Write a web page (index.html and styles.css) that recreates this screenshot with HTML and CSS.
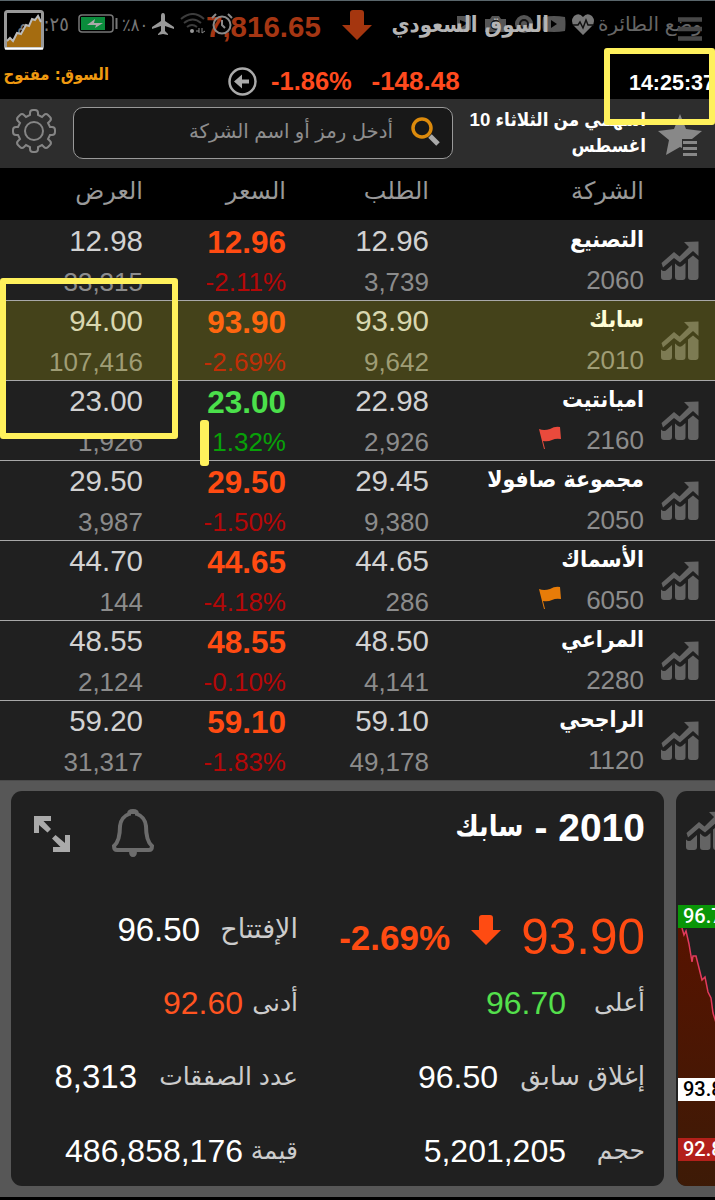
FILE: index.html
```
<!DOCTYPE html>
<html lang="ar">
<head>
  <meta charset="utf-8">
  <title>السوق السعودي</title>
  <link rel="stylesheet" href="styles.css">
</head>
<body>
  <svg class="defs" width="0" height="0">
    <symbol id="chart" viewBox="0 0 38 40">
      <path d="M0 28.500q3 3 6 0l5-4.500v12q0 3-3 3H3q-3 0-3-3zM14 22.500l3 2.500q2 1.500 4 0l3.500-3v14q0 3-3 3H17q-3 0-3-3zM27 18.500l5-4 5.500 4.500v17q0 3-3 3H30q-3 0-3-3z"/>
      <path d="M.5 22L13 11l5.500 4.500L28 6l-5-5 14.500-.5V15L32 10 19 21.500 13 17 2 26.500z"/>
    </symbol>
    <symbol id="down" viewBox="0 0 30 30">
      <path d="M8 3q0-3 3-3h8q3 0 3 3v12h8L15 30 0 15h8z"/>
    </symbol>
    <symbol id="flag" viewBox="0 0 22 23">
      <path d="M0 3q5 2 11 0 5-3 10-2l1 12q-5-1-9 1-4 2-9 1l2 8-1 0z"/>
    </symbol>
  </svg>

  <div class="screen">
    <header class="header">
      <div class="status-bar">
        <span class="phone-time"><bdo dir="ltr">م ٢:٢٥</bdo></span>
        <svg class="battery" viewBox="0 0 41 20">
          <rect x="1" y="1" width="34" height="17" rx="3" fill="none" stroke="#777" stroke-width="1.5"/>
          <rect x="3" y="3" width="24" height="13" fill="#0a8c3c"/>
          <path d="M9 11l8-6-1 4h9l-8 5 1-3z" fill="#aaa"/>
          <path d="M38.500 4v11" stroke="#777" stroke-width="2"/>
        </svg>
        <span class="charge"><bdo dir="ltr">٪٨٠</bdo></span>
        <svg class="plane" viewBox="0 0 24 24"><path d="M12 1q2 0 2 3v5l9 6v2l-9-3v5l3 3v1l-5-1-5 1v-1l3-3v-5l-9 3v-2l9-6V4q0-3 2-3z"/></svg>
        <svg class="wifi" viewBox="0 0 25 22">
          <path d="M1 6q12-10 23 0M4 10q9-7 17 0M7 14q5-4 10 0" fill="none" stroke="#3c3c3c" stroke-width="2"/>
          <circle cx="12" cy="18" r="2" fill="#999"/>
          <path d="M16 18h3M19 15v5M22 15v5l3-2" fill="none" stroke="#888"/>
        </svg>
        <svg class="notifications" viewBox="0 0 140 24">
          <path d="M2 4h14v14H2zM30 7h5l2-3h7l2 3h5v13H30zM88 5q11-2 22 0 1 7 0 14-11 2-22 0-1-7 0-14z" fill="#555"/>
          <path d="M5 8l8 3-8 5zM96 8l6 4-6 4z" fill="#000"/>
          <circle cx="40.500" cy="13" r="4" fill="none" stroke="#111" stroke-width="2"/>
          <circle cx="69" cy="12" r="9" fill="#555"/>
          <circle cx="69" cy="12" r="4" fill="none" stroke="#111" stroke-width="2"/>
          <path d="M128 23l-9-9q-4-5 0-10 5-4 9 1 4-5 9-1 4 5 0 10z" fill="#777"/>
          <path d="M118 13h5l2-3 3 6 3-8 2 5h6" fill="none" stroke="#111" stroke-width="1.5"/>
        </svg>
        <span class="flight-mode" dir="rtl">وضع الطائرة</span>
      </div>
      <div class="app-bar">
        <svg class="logo" viewBox="0 0 40 40">
          <rect x="1.5" y="1.5" width="37" height="37" rx="2" fill="none" stroke="#999" stroke-width="3"/>
          <path d="M3 37V31l3-3 3 3 4-8 4 1 5-9 3 1 3-7 3 1 3-4 3 6v25z" fill="#a56c10"/>
          <path d="M3 31l3-3 3 3 4-8 4 1 5-9 3 1 3-7 3 1 3-4 3 6" fill="none" stroke="#bbb" stroke-width="2"/>
          <path d="M1 38.5h38" stroke="#fff" stroke-width="2"/>
        </svg>
        <span class="index">7,816.65</span>
        <svg class="index-arrow"><use href="#down"/></svg>
        <span class="market" dir="rtl">السوق السعودي</span>
        <svg class="menu" viewBox="0 0 24 24"><path d="M0 2.5h24M0 12h24M0 21.5h24"/></svg>
      </div>
      <svg class="alarm" viewBox="0 0 22 22">
        <circle cx="11" cy="12" r="8.500" fill="none" stroke="#8a8a8a" stroke-width="2"/>
        <path d="M11 7v5l3 3M1 5l4-4M21 5l-4-4" fill="none" stroke="#8a8a8a" stroke-width="2"/>
      </svg>
      <div class="summary">
        <span class="state" dir="rtl">السوق: مفتوح</span>
        <svg class="back" viewBox="0 0 29 29">
          <circle cx="14.500" cy="14.500" r="13" fill="none" stroke="#aaa" stroke-width="2.500"/>
          <path d="M6 14.500l8-7v5h7v4h-7v5z" fill="#aaa"/>
        </svg>
        <span class="change-pct">-1.86%</span>
        <span class="change">-148.48</span>
        <span class="clock">14:25:37</span>
      </div>
    </header>

    <div class="toolbar">
      <svg class="gear" viewBox="-22 -22 44 44">
        <path d="M-4-16V-18Q-4-21-1-21H1Q4-21 4-18V-16L8-14 10-16Q12-18 14-16L16-14Q18-12 16-10L14-8 16-4H18Q21-4 21-1V1Q21 4 18 4H16L14 8 16 10Q18 12 16 14L14 16Q12 18 10 16L8 14 4 16V18Q4 21 1 21H-1Q-4 21-4 18V16L-8 14-10 16Q-12 18-14 16L-16 14Q-18 12-16 10L-14 8-16 4H-18Q-21 4-21 1V-1Q-21-4-18-4H-16L-14-8-16-10Q-18-12-16-14L-14-16Q-12-18-10-16L-8-14Z"/>
        <circle r="9"/>
      </svg>
      <div class="search">
        <span class="placeholder" dir="rtl">أدخل رمز أو اسم الشركة</span>
        <svg class="lens" viewBox="0 0 30 30">
          <path d="M19 19l8 8" stroke="#aaa" stroke-width="5"/>
          <circle cx="11" cy="11" r="9" fill="none" stroke="#dc8a0c" stroke-width="3.500"/>
        </svg>
      </div>
      <div class="list-name" dir="rtl">اسهمي من الثلاثاء 10<br>اغسطس</div>
      <svg class="star" viewBox="0 0 44 44">
        <path d="M22 0l6 15 16 2-10 8H24v9l-2-1-14 8 3-15L0 17l16-2z"/>
        <path d="M25 28.500h14M25 34.500h14M25 40.500h14" stroke="#888" stroke-width="3"/>
      </svg>
    </div>

    <div class="row head">
      <span dir="rtl">العرض</span>
      <span dir="rtl">السعر</span>
      <span dir="rtl">الطلب</span>
      <span dir="rtl">الشركة</span>
    </div>

    <main class="stocks">
      <div class="row down">
        <div class="ask"><b>12.98</b><i>33,315</i></div>
        <div class="price"><b>12.96</b><i>-2.11%</i></div>
        <div class="bid"><b>12.96</b><i>3,739</i></div>
        <div class="company"><b dir="rtl">التصنيع</b><i>2060</i></div>
        <svg class="chart-icon"><use href="#chart"/></svg>
      </div>
      <div class="row down selected">
        <div class="ask"><b>94.00</b><i>107,416</i></div>
        <div class="price"><b>93.90</b><i>-2.69%</i></div>
        <div class="bid"><b>93.90</b><i>9,642</i></div>
        <div class="company"><b dir="rtl">سابك</b><i>2010</i></div>
        <svg class="chart-icon"><use href="#chart"/></svg>
      </div>
      <div class="row up">
        <div class="ask"><b>23.00</b><i>1,926</i></div>
        <div class="price"><b>23.00</b><i>1.32%</i></div>
        <div class="bid"><b>22.98</b><i>2,926</i></div>
        <div class="company"><b dir="rtl">اميانتيت</b><i><svg class="flag red"><use href="#flag"/></svg>2160</i></div>
        <svg class="chart-icon"><use href="#chart"/></svg>
      </div>
      <div class="row down">
        <div class="ask"><b>29.50</b><i>3,987</i></div>
        <div class="price"><b>29.50</b><i>-1.50%</i></div>
        <div class="bid"><b>29.45</b><i>9,380</i></div>
        <div class="company"><b dir="rtl">مجموعة صافولا</b><i>2050</i></div>
        <svg class="chart-icon"><use href="#chart"/></svg>
      </div>
      <div class="row down">
        <div class="ask"><b>44.70</b><i>144</i></div>
        <div class="price"><b>44.65</b><i>-4.18%</i></div>
        <div class="bid"><b>44.65</b><i>286</i></div>
        <div class="company"><b dir="rtl">الأسماك</b><i><svg class="flag orange"><use href="#flag"/></svg>6050</i></div>
        <svg class="chart-icon"><use href="#chart"/></svg>
      </div>
      <div class="row down">
        <div class="ask"><b>48.55</b><i>2,124</i></div>
        <div class="price"><b>48.55</b><i>-0.10%</i></div>
        <div class="bid"><b>48.50</b><i>4,141</i></div>
        <div class="company"><b dir="rtl">المراعي</b><i>2280</i></div>
        <svg class="chart-icon"><use href="#chart"/></svg>
      </div>
      <div class="row down">
        <div class="ask"><b>59.20</b><i>31,317</i></div>
        <div class="price"><b>59.10</b><i>-1.83%</i></div>
        <div class="bid"><b>59.10</b><i>49,178</i></div>
        <div class="company"><b dir="rtl">الراجحي</b><i>1120</i></div>
        <svg class="chart-icon"><use href="#chart"/></svg>
      </div>
    </main>

    <section class="details">
      <div class="card">
        <div class="card-head">
          <svg class="expand" viewBox="0 0 38 38">
            <path d="M1 1h17v5h-7.500l7.500 8-3.500 3.500L6 10v8H1zM37 37H20v-5h7.500L19 23.500l3.500-3.500 9.500 8V20h5z"/>
          </svg>
          <svg class="bell" viewBox="0 0 42 50">
            <path d="M17 5q0-3 4-3t4 3q8 3 9 12 0 15 6 20 0 4-3 4H5q-3 0-3-4 6-5 6-20 1-9 9-12z" fill="none" stroke="#6c6c6c" stroke-width="4"/>
            <path d="M17 42h8q0 6-4 6t-4-6zM17 5q0-4 4-4t4 4z" fill="#6c6c6c"/>
          </svg>
          <h2 dir="rtl">2010 - <span>سابك</span></h2>
        </div>
        <div class="stats">
          <div class="stat open"><span class="value">96.50</span><span class="label" dir="rtl">الإفتتاح</span></div>
          <div class="last">
            <span class="last-pct">-2.69%</span>
            <svg class="last-arrow"><use href="#down"/></svg>
            <span class="last-price">93.90</span>
          </div>
          <div class="stat low"><span class="value">92.60</span><span class="label" dir="rtl">أدنى</span></div>
          <div class="stat high"><span class="value">96.70</span><span class="label" dir="rtl">أعلى</span></div>
          <div class="stat trades"><span class="value">8,313</span><span class="label" dir="rtl">عدد الصفقات</span></div>
          <div class="stat prev"><span class="value">96.50</span><span class="label" dir="rtl">إغلاق سابق</span></div>
          <div class="stat total"><span class="value">486,858,176</span><span class="label" dir="rtl">قيمة</span></div>
          <div class="stat volume"><span class="value">5,201,205</span><span class="label" dir="rtl">حجم</span></div>
        </div>
      </div>
      <div class="card next-card">
        <svg class="chart-icon"><use href="#chart"/></svg>
        <svg class="graph" viewBox="0 0 37 258">
          <defs>
            <linearGradient id="fall" x1="0" y1="0" x2="0" y2="1">
              <stop offset="0" stop-color="#571300"/>
              <stop offset="1" stop-color="#3b1b07"/>
            </linearGradient>
          </defs>
          <path d="M0 0h4l2 7 2-4 3 13 3 18 1-6h3l3 12 3 12 3-3 3 15 3 6 2 15 4 13 3 1v179H0z" fill="url(#fall)"/>
          <path d="M4 0l2 7 2-4 3 13 3 18 1-6h3l3 12 3 12 3-3 3 15 3 6 2 15 4 13 3 1" fill="none" stroke="#e23a5c" stroke-width="1.500"/>
        </svg>
        <span class="tag tag-high">96.70</span>
        <span class="tag tag-last">93.80</span>
        <span class="tag tag-low">92.80</span>
      </div>
    </section>

    <div class="mark mark-clock"></div>
    <div class="mark mark-ask"></div>
    <div class="mark-line"></div>
  </div>
</body>
</html>
```
FILE: styles.css
```
* {
  box-sizing: border-box;
}
body {
  margin: 0;
  background: #000;
  color: #fff;
  font-family: "Liberation Sans", "DejaVu Sans", sans-serif;
}
svg {
  display: block;
  flex-shrink: 0;
}
.defs {
  position: absolute;
}
.screen {
  position: relative;
  width: 715px;
  height: 1200px;
  overflow: hidden;
}
span, b, i, h2 {
  white-space: nowrap;
}

/* header */
.header {
  position: relative;
  height: 99px;
  border-top: 1px solid #59666b;
}
.app-bar {
  position: relative;
  display: flex;
  height: 58px;
  padding-left: 4px;
}
.logo {
  width: 40px;
  height: 40px;
  margin-top: 9px;
}
.index {
  width: 116px;
  margin-left: 162px;
  font-size: 29.5px;
  font-weight: bold;
  line-height: 51px;
  color: #a53613;
}
.index-arrow {
  width: 30px;
  height: 30px;
  margin: 9px 0 0 20px;
  fill: #a5360f;
}
.market {
  width: 157px;
  margin-left: 20px;
  font-family: "DejaVu Sans Condensed", "DejaVu Sans", sans-serif;
  font-size: 22px;
  font-weight: bold;
  line-height: 48px;
  color: #b5b5b5;
}
.menu {
  width: 24px;
  height: 24px;
  margin: 16px 0 0 129px;
  stroke: #484848;
  stroke-width: 4.5;
}
.status-bar {
  position: absolute;
  top: 0;
  left: 0;
  display: flex;
  align-items: center;
  width: 715px;
  height: 46px;
  padding-left: 17px;
  color: #777;
  font-size: 20px;
}
.phone-time {
  width: 61px;
}
.phone-time, .charge {
  font-family: "DejaVu Sans Condensed", "DejaVu Sans", sans-serif;
}
.battery {
  width: 41px;
  height: 20px;
}
.charge {
  width: 29px;
  margin-left: 3px;
  font-size: 18px;
}
.plane {
  width: 24px;
  height: 24px;
  fill: #999;
}
.wifi {
  width: 25px;
  height: 22px;
  margin-left: 5px;
}
.alarm {
  position: absolute;
  top: 12px;
  left: 211px;
  width: 22px;
  height: 22px;
}
.notifications {
  width: 140px;
  height: 24px;
  margin-left: 250px;
}
.flight-mode {
  width: 107px;
  color: #666;
}
.summary {
  display: flex;
  height: 40px;
  padding-left: 4px;
}
.state {
  width: 105px;
  font-family: "DejaVu Sans Condensed", "DejaVu Sans", sans-serif;
  font-size: 16.5px;
  font-weight: bold;
  line-height: 32px;
  color: #f09a10;
}
.back {
  width: 29px;
  height: 29px;
  margin: 8px 0 0 119px;
}
.change-pct, .change {
  width: 87px;
  font-size: 25.5px;
  font-weight: bold;
  line-height: 44px;
  color: #ff4a1e;
}
.change-pct {
  margin-left: 14px;
}
.change {
  width: 90px;
  margin-left: 14px;
  font-size: 26px;
}
.clock {
  margin-left: 168px;
  font-size: 21.5px;
  font-weight: bold;
  line-height: 49px;
}

/* toolbar */
.toolbar {
  display: flex;
  height: 69px;
  padding-left: 12px;
  background: #2d2d2d;
}
.gear {
  width: 44px;
  height: 44px;
  margin-top: 10px;
  fill: none;
  stroke: #858585;
  stroke-width: 2;
}
.search {
  display: flex;
  justify-content: flex-end;
  width: 380px;
  height: 52px;
  margin: 8px 0 0 17px;
  padding-right: 11px;
  border: 1px solid #999;
  border-radius: 10px;
  background: #181818;
}
.placeholder {
  font-size: 19.7px;
  line-height: 47px;
  color: #8e8e8e;
}
.lens {
  width: 30px;
  height: 30px;
  margin: 9px 0 0 18px;
}
.list-name {
  width: 193px;
  padding-top: 8px;
  font-family: "Liberation Sans", "DejaVu Sans Condensed", "DejaVu Sans", sans-serif;
  font-size: 18.7px;
  font-weight: bold;
  line-height: 26px;
}
.star {
  width: 44px;
  height: 44px;
  margin: 15px 0 0 12px;
  fill: #888;
}

/* stocks table */
.row {
  position: relative;
  display: grid;
  grid-template-columns: 143px 143px 143px 215px 71px;
  height: 80px;
  border-bottom: 1px solid #a8a8a8;
  background: #202020;
  text-align: right;
}
.row.head {
  height: 52px;
  border: 0;
  background: #000;
  color: #999;
  font-size: 24px;
  line-height: 46px;
}
.stocks {
  padding-top: 1px;
  background: #202020;
}
.stocks .row:last-child {
  border-color: #4a4a4a;
}
.row b, .row i {
  display: block;
  font-style: normal;
}
.ask b, .bid b {
  font-size: 29.5px;
  font-weight: normal;
  line-height: 40px;
  color: #d2d2d2;
}
.ask i, .bid i {
  font-size: 26px;
  line-height: 42px;
  color: #8c8c8c;
}
.price b {
  font-size: 31.5px;
  line-height: 42px;
}
.price i {
  font-size: 26px;
  line-height: 38px;
}
.down .price b {
  color: #ff4b12;
}
.down .price i {
  color: #b40808;
}
.up .price b {
  color: #4be04b;
}
.up .price i {
  color: #08a008;
}
.company b {
  font-family: "DejaVu Sans Condensed", "DejaVu Sans", sans-serif;
  font-size: 22.8px;
  line-height: 37px;
}
.row .company i {
  display: flex;
  justify-content: flex-end;
  font-size: 26px;
  line-height: 44px;
  color: #8c8c8c;
}
.flag {
  width: 22px;
  height: 23px;
  margin: 8px 25px 0 0;
}
.red {
  fill: #ea4a3c;
}
.orange {
  fill: #e87c08;
}
.chart-icon {
  width: 38px;
  height: 40px;
  margin: 20px 0 0 17px;
  fill: #646464;
}
.selected::after {
  content: "";
  position: absolute;
  inset: 0;
  background: rgba(255, 245, 0, 0.165);
}

/* details */
.details {
  display: flex;
  gap: 12px;
  height: 416px;
  padding: 10px 0 11px 11px;
  background: #575757;
}
.card {
  flex-shrink: 0;
  width: 653px;
  height: 395px;
  border-radius: 11px;
  background: #202020;
  overflow: hidden;
}
.card-head {
  display: flex;
  height: 100px;
  padding-left: 22px;
}
.expand {
  width: 38px;
  height: 38px;
  margin-top: 24px;
  fill: #aaa;
}
.bell {
  width: 42px;
  height: 50px;
  margin: 18px 0 0 41px;
}
h2 {
  flex: 1;
  margin: 0;
  padding-right: 19px;
  font-size: 39px;
  line-height: 74px;
}
h2 span {
  position: relative;
  top: -5px;
  font-family: "DejaVu Sans Condensed", "DejaVu Sans", sans-serif;
  font-size: 28.5px;
}
.stats {
  display: grid;
  grid-template-columns: 287px 347px;
  grid-template-rows: 73px 74px 74px 74px;
}
.stat {
  display: flex;
  justify-content: flex-end;
  line-height: 78px;
}
.value {
  font-size: 32px;
}
.label {
  margin-left: 9px;
  font-size: 25px;
  line-height: 76px;
  color: #ccc;
}
.open .value, .trades .value {
  font-size: 33px;
}
.open .label {
  width: 78px;
  margin-left: 20px;
  font-size: 27px;
}
.low .label, .total .label {
  width: 46px;
}
.low .value {
  color: #ff5420;
}
.high .label {
  width: 51px;
  margin-left: 28px;
}
.high .value {
  color: #54e04c;
}
.trades .label {
  width: 141px;
  margin-left: 20px;
}
.prev .label {
  width: 127px;
  margin-left: 20px;
  font-size: 26.5px;
}
.volume .label {
  width: 48px;
  margin-left: 31px;
}
.last {
  display: flex;
  justify-content: flex-end;
  color: #ff4b12;
}
.last-pct {
  font-size: 35px;
  font-weight: bold;
  line-height: 93px;
}
.last-arrow {
  width: 30px;
  height: 30px;
  margin: 24px 20px 0 21px;
  fill: #ff4b12;
}
.last-price {
  font-size: 49.5px;
  line-height: 91px;
}
.next-card {
  position: relative;
}
.next-card .chart-icon {
  margin: 20px 0 0 10px;
}
.graph {
  width: 37px;
  height: 258px;
  margin: 77px 0 0 2px;
}
.tag {
  position: absolute;
  left: 2px;
  width: 60px;
  height: 23px;
  padding-left: 5px;
  font: 500 20px/23px Roboto, sans-serif;
}
.tag-high {
  top: 114px;
  background: #0a9608;
}
.tag-last {
  top: 287px;
  background: #fff;
  color: #000;
}
.tag-low {
  top: 347px;
  background: #b3201a;
}

/* highlighter marks */
.mark {
  position: absolute;
  border: 6px solid #fff15c;
  border-radius: 3px;
}
.mark-clock {
  top: 48px;
  left: 604px;
  width: 111px;
  height: 77px;
}
.mark-ask {
  top: 278px;
  left: 0;
  width: 178px;
  height: 161px;
}
.mark-line {
  position: absolute;
  top: 420px;
  left: 200px;
  width: 9px;
  height: 46px;
  border-radius: 3px;
  background: #fff15c;
}
```
